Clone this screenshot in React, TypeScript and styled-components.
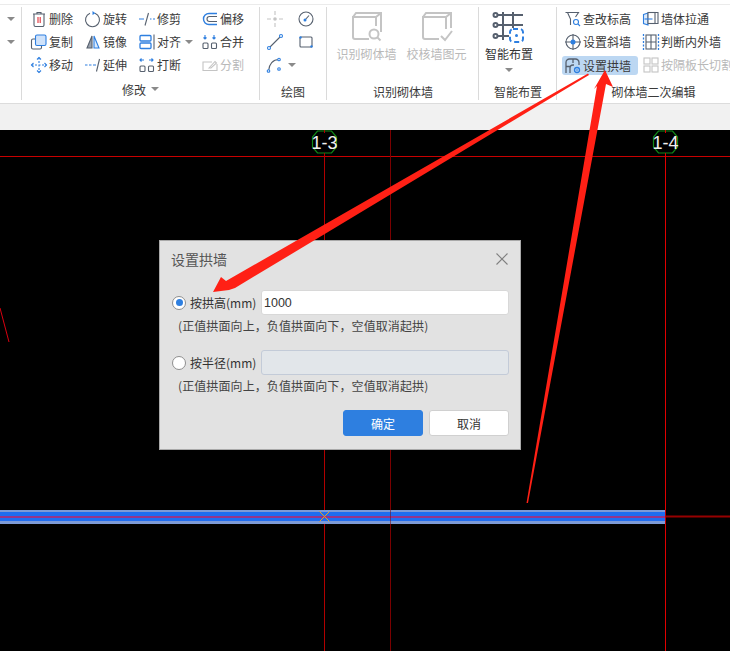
import React from "react";
import styled, { createGlobalStyle } from "styled-components";

const BLUE = "#2e7fe0";
const DARK = "#56606e";
const GRAY = "#c4c4c4";
const CJK = `"Noto Sans CJK SC", "Noto Sans", sans-serif`;

const GlobalStyle = createGlobalStyle`
   html, body {
      margin: 0;
      padding: 0;
      background: #000;
   }
`;

const Page = styled.div`
   position: relative;
   width: 730px;
   height: 651px;
   display: flex;
   flex-direction: column;
   overflow: hidden;
   font-family: ${CJK};
   font-size: 12px;
   color: #333;
`;

const Ribbon = styled.div`
   height: 98px;
   flex: none;
   display: flex;
   padding-top: 5px;
   background: #fff;
   border-bottom: 1px solid #dcdcdc;
   box-shadow: inset 0 4px 0 #fff, inset 0 5px 0 #ebebeb;
`;

const Strip = styled.div`
   height: 26px;
   flex: none;
   background: #f1f1f1;
`;

const Group = styled.section<{ $width: number; $first?: boolean }>`
   width: ${(p) => p.$width}px;
   box-sizing: border-box;
   flex: none;
   display: flex;
   flex-direction: column;
   margin: 2px 0 3px;
   border-left: ${(p) => (p.$first ? "none" : "1px solid #dadada")};
`;

const GroupBody = styled.div<{ $endPad?: number }>`
   height: 72px;
   flex: none;
   padding-right: ${(p) => p.$endPad ?? 0}px;
`;

const GroupLabel = styled.div<{ $shift?: number; $raise?: number }>`
   height: 24px;
   flex: none;
   display: flex;
   align-items: center;
   justify-content: center;
   gap: 5px;
   margin-top: ${(p) => -(p.$raise ?? 0)}px;
   padding-left: ${(p) => p.$shift ?? 0}px;
   white-space: nowrap;
   color: #3a3a3a;
`;

const ToolGrid = styled.div<{ $columns: string; $pad: number }>`
   display: grid;
   grid-template-columns: ${(p) => p.$columns};
   grid-auto-rows: 23px;
   padding-left: ${(p) => p.$pad}px;
`;

const Tool = styled.div<{ $disabled?: boolean; $active?: boolean }>`
   display: flex;
   align-items: center;
   gap: 1px;
   white-space: nowrap;
   color: ${(p) => (p.$disabled ? "#b9b9b9" : "#3a3a3a")};
   ${(p) =>
      p.$active &&
      `
      background: #bcd7f2;
      border-radius: 3px;
      margin: 3px 4px 1px -2px;
      padding-left: 2px;
   `}
`;

const Caret = styled.span<{ $color?: string }>`
   width: 0;
   height: 0;
   border-left: 4px solid transparent;
   border-right: 4px solid transparent;
   border-top: 4px solid ${(p) => p.$color ?? "#8a8a8a"};
`;

const StubColumn = styled.div`
   display: flex;
   flex-direction: column;
   align-items: center;
`;

const StubCell = styled.div`
   height: 23px;
   width: 14px;
   display: flex;
   align-items: center;
   justify-content: center;
`;

const BigRow = styled.div`
   display: flex;
   justify-content: center;
   gap: 10px;
`;

const BigTool = styled.div<{ $disabled?: boolean }>`
   display: flex;
   flex-direction: column;
   align-items: center;
   width: 60px;
   white-space: nowrap;
   color: ${(p) => (p.$disabled ? "#b9b9b9" : "#333")};
`;

const BigIcon = styled.svg`
   width: 34px;
   height: 34px;
   margin-top: 3px;
   margin-bottom: 1px;
`;

const SmartCaret = styled.div`
   display: flex;
   justify-content: center;
   margin-top: 6px;
`;

const Canvas = styled.div`
   position: relative;
   flex: 1;
   background: #000;
`;

const Drawing = styled.svg`
   position: absolute;
   inset: 0;
   width: 730px;
   height: 521px;
`;

const Annotation = styled.svg`
   position: absolute;
   left: 0;
   top: 0;
   width: 730px;
   height: 651px;
   pointer-events: none;
`;

const Dialog = styled.div`
   position: absolute;
   left: 159px;
   top: 110px;
   width: 362px;
   height: 210px;
   box-sizing: border-box;
   display: flex;
   flex-direction: column;
   padding: 0 11px 0 12px;
   background: #e2e2e2;
   border: 1px solid #a9a9a9;
`;

const DialogHead = styled.div`
   height: 36px;
   flex: none;
   margin: 0 0 10px -1px;
   padding-bottom: 3px;
   display: flex;
   align-items: center;
   justify-content: space-between;
   font-size: 14px;
   color: #555;
`;

const CloseIcon = styled.svg`
   width: 12px;
   height: 12px;
   margin-right: 1px;
`;

const OptionRow = styled.div`
   display: flex;
   align-items: center;
   height: 25px;
`;

const Radio = styled.span<{ $checked?: boolean }>`
   width: 14px;
   height: 14px;
   box-sizing: border-box;
   flex: none;
   display: flex;
   align-items: center;
   justify-content: center;
   background: #fff;
   border: 1px solid #8e8e8e;
   border-radius: 50%;
   &::after {
      content: "";
      display: ${(p) => (p.$checked ? "block" : "none")};
      width: 7px;
      height: 7px;
      border-radius: 50%;
      background: ${BLUE};
   }
`;

const OptionLabel = styled.label`
   width: 66px;
   flex: none;
   margin: 0 5px 0 4px;
   font-size: 12px;
   color: #333;
   white-space: nowrap;
`;

const ValueInput = styled.input`
   flex: 1;
   min-width: 0;
   height: 25px;
   box-sizing: border-box;
   padding: 1px 2px 0;
   font-family: "Liberation Sans", sans-serif;
   font-size: 12.5px;
   color: #333;
   background: #fff;
   border: 1px solid #d8d8d8;
   border-radius: 3px;
   outline: none;
   &:disabled {
      background: #e2e6ea;
      border-color: #c3cbd8;
   }
`;

const Hint = styled.div`
   height: 20px;
   margin: 0 0 15px;
   padding-left: 6px;
   display: flex;
   align-items: center;
   color: #444;
   letter-spacing: 0.1px;
   white-space: nowrap;
`;

const Actions = styled.div`
   display: flex;
   justify-content: flex-end;
   gap: 6px;
`;

const Button = styled.button<{ $primary?: boolean }>`
   width: 80px;
   height: 26px;
   padding: 0;
   font-family: ${CJK};
   font-size: 12px;
   color: ${(p) => (p.$primary ? "#fff" : "#333")};
   background: ${(p) => (p.$primary ? BLUE : "#fff")};
   border: 1px solid ${(p) => (p.$primary ? BLUE : "#d0d0d0")};
   border-radius: 3px;
`;

const Glyph = ({ children }: { children: React.ReactNode }) => (
   <svg
      width="18"
      height="18"
      viewBox="0 0 18 18"
      fill="none"
      strokeWidth="1.1"
      style={{ flex: "none" }}>
      {children}
   </svg>
);

const arrowsIn = (
   <>
      <path d="M4 2v4M2.5 4.5 4 6l1.500-1.500M13 2v4M11.500 4.500 13 6l1.500-1.500" stroke={BLUE} />
      <rect x="2" y="10" width="5" height="5.500" rx="1" stroke={DARK} />
      <rect x="10.500" y="10" width="5" height="5.500" rx="1" stroke={DARK} />
   </>
);

const arrowsOut = (
   <>
      <path d="M6 4H2M3.500 2.500 2 4l1.500 1.500M11 4h4M13.500 2.500 15 4l-1.500 1.500" stroke={BLUE} />
      <rect x="2" y="10" width="5" height="5.500" rx="1" stroke={DARK} />
      <rect x="10.500" y="10" width="5" height="5.500" rx="1" stroke={DARK} />
   </>
);

const icons: Record<string, React.ReactNode> = {
   trash: (
      <>
         <path d="M3 4h12M7 4V2.500h4V4M4 4v11a1.500 1.500 0 0 0 1.500 1.500h7A1.500 1.500 0 0 0 14 15V4" stroke={DARK} />
         <path d="M8 7v6M10.200 7v6" stroke="#e0303a" />
      </>
   ),
   rotate: (
      <>
         <path d="M11 3.200A7 7 0 1 1 6 3.200" stroke={DARK} />
         <path d="M8.500 1 11.500 3.200 8.500 5z" fill={BLUE} />
      </>
   ),
   trim: (
      <>
         <path d="M1 9h5M12 9h1.500M15 9h2" stroke={BLUE} />
         <path d="M10.500 3 7 15.500" stroke={DARK} />
      </>
   ),
   offset: (
      <>
         <path d="M16 3.500H8a5.500 5.500 0 0 0 0 11h8" stroke={BLUE} strokeWidth="1.400" />
         <path d="M16 6.500H8.500a2.500 2.500 0 0 0 0 5H16" stroke={DARK} />
      </>
   ),
   copy: (
      <>
         <rect x="1.500" y="6" width="10" height="10" rx="1.500" stroke={DARK} />
         <rect x="5.500" y="2" width="10.500" height="10.500" rx="1.500" fill="#cfe2fa" stroke={BLUE} />
      </>
   ),
   mirror: (
      <>
         <path d="M8 3 3 15h5z" fill="#9aa2ad" stroke={DARK} />
         <path d="M10 3 15 15h-5z" fill="#dcebfc" stroke={BLUE} />
      </>
   ),
   align: (
      <>
         <rect x="2" y="2.500" width="11" height="5.500" rx="1" stroke={BLUE} strokeWidth="1.300" />
         <rect x="2" y="10" width="11" height="5.500" rx="1" stroke={BLUE} strokeWidth="1.300" />
         <path d="M16 1.500v15" stroke={DARK} />
      </>
   ),
   merge: arrowsIn,
   move: (
      <>
         <path d="M9 1.500v15M1.500 9h15" stroke={BLUE} strokeDasharray="2 1.500" />
         <path d="M7 3.500 9 1.500l2 2M7 14.500l2 2 2-2M3.500 7l-2 2 2 2M14.500 7l2 2-2 2" stroke={BLUE} />
      </>
   ),
   extend: (
      <>
         <path d="M1 9h2.500M5 9h2.500M9 9h3" stroke={BLUE} />
         <path d="M15.500 3 12.500 15.500" stroke={DARK} />
      </>
   ),
   split: arrowsOut,
   cut: (
      <>
         <path d="M16 8v6.500H2V6h9" stroke={GRAY} />
         <path d="M8 12l6-6.500 1.500 1.500-5.500 5z" stroke={GRAY} />
      </>
   ),
   point: (
      <>
         <path d="M1 9h4M13 9h4M9 1v4M9 13v4" stroke={GRAY} />
         <circle cx="9" cy="9" r="1.800" fill={GRAY} />
      </>
   ),
   gauge: (
      <>
         <circle cx="9" cy="9" r="7" stroke={DARK} />
         <path d="M8 10 12 5.500" stroke={DARK} />
         <circle cx="8" cy="10" r="1.500" fill={BLUE} />
      </>
   ),
   line: (
      <>
         <path d="M3.500 14.500 14.500 3.500" stroke={DARK} />
         <circle cx="3" cy="15" r="1.500" fill="#fff" stroke={BLUE} />
         <circle cx="15" cy="3" r="1.500" fill="#fff" stroke={BLUE} />
      </>
   ),
   rect: (
      <>
         <rect x="3" y="4" width="12" height="10" rx="1" stroke={DARK} />
         <circle cx="3.500" cy="4.500" r="1.200" fill={BLUE} />
         <circle cx="14.500" cy="13.500" r="1.200" fill={BLUE} />
      </>
   ),
   arc: (
      <>
         <path d="M2.500 15C3 8 7 3.500 13 3.500" stroke={DARK} />
         <circle cx="2.500" cy="15" r="1.300" fill="#fff" stroke={BLUE} />
         <circle cx="13" cy="3.500" r="1.300" fill="#fff" stroke={BLUE} />
         <circle cx="13" cy="13" r="1.300" fill="#fff" stroke={BLUE} />
      </>
   ),
   funnel: (
      <>
         <path d="M1.500 2.500h13l-3 4.500M3.500 2.500l3 6.500v6" stroke={DARK} />
         <circle cx="12" cy="12" r="2.500" stroke={BLUE} />
         <path d="M14 14l2 2" stroke={BLUE} />
      </>
   ),
   slope: (
      <>
         <circle cx="9" cy="9" r="7" stroke={DARK} />
         <path d="M9 1v16M1 9h16" stroke={DARK} />
         <circle cx="9" cy="9" r="2.500" fill={BLUE} />
      </>
   ),
   arch: (
      <>
         <path d="M2 16V5.500A3.500 3.500 0 0 1 5.500 2h6A3.500 3.500 0 0 1 15 5.500V8" stroke={DARK} strokeWidth="1.300" />
         <path d="M6 16v-5a3 3 0 0 1 3-3h1M2 9.500h4M9 2v4" stroke={DARK} strokeWidth="1.300" />
         <circle cx="13" cy="13" r="2.500" stroke={BLUE} strokeWidth="1.300" />
         <circle cx="13" cy="13" r="0.800" fill={BLUE} />
      </>
   ),
   pull: (
      <>
         <path d="M1.500 4.500 6 3v12l-4.500-1.500z" fill="#dcebfc" stroke={BLUE} />
         <rect x="6" y="2.500" width="7" height="11" fill="#fff" stroke={DARK} />
         <path d="M9 2.500h7v11h-3" stroke={DARK} />
         <path d="M2.500 9h8" stroke={BLUE} />
      </>
   ),
   inner: (
      <>
         <path d="M1.500 1v16M16.500 1v16" stroke={BLUE} strokeDasharray="2 1.500" strokeWidth="1.300" />
         <rect x="4" y="2" width="10" height="14" stroke={DARK} />
         <path d="M4 9h10M9 2v14" stroke={DARK} />
      </>
   ),
   panel: (
      <>
         <rect x="2" y="2" width="6" height="6" stroke={GRAY} />
         <rect x="2" y="10" width="6" height="6" stroke={GRAY} />
         <rect x="10" y="2" width="6" height="6" stroke={GRAY} />
         <rect x="10" y="10" width="6" height="6" stroke={GRAY} />
      </>
   ),
};

type ToolItem = {
   icon: string;
   text?: string;
   disabled?: boolean;
   active?: boolean;
   caret?: boolean;
};

const modifyTools: ToolItem[] = [
   { icon: "trash", text: "删除" },
   { icon: "rotate", text: "旋转" },
   { icon: "trim", text: "修剪" },
   { icon: "offset", text: "偏移" },
   { icon: "copy", text: "复制" },
   { icon: "mirror", text: "镜像" },
   { icon: "align", text: "对齐", caret: true },
   { icon: "merge", text: "合并" },
   { icon: "move", text: "移动" },
   { icon: "extend", text: "延伸" },
   { icon: "split", text: "打断" },
   { icon: "cut", text: "分割", disabled: true },
];

const drawTools: ToolItem[] = [
   { icon: "point" },
   { icon: "gauge" },
   { icon: "line" },
   { icon: "rect" },
   { icon: "arc", caret: true },
];

const editTools: ToolItem[] = [
   { icon: "funnel", text: "查改标高" },
   { icon: "pull", text: "墙体拉通" },
   { icon: "slope", text: "设置斜墙" },
   { icon: "inner", text: "判断内外墙" },
   { icon: "arch", text: "设置拱墙", active: true },
   { icon: "panel", text: "按隔板长切割", disabled: true },
];

const ToolList = ({ items }: { items: ToolItem[] }) => (
   <>
      {items.map((t) => (
         <Tool
            key={t.icon}
            $disabled={t.disabled}
            $active={t.active}>
            <Glyph>{icons[t.icon]}</Glyph>
            {t.text && <span>{t.text}</span>}
            {t.caret && <Caret style={{ marginLeft: 3 }} />}
         </Tool>
      ))}
   </>
);

const HINT = "(正值拱面向上，负值拱面向下，空值取消起拱)";

const AxisMark = ({ x, label, color }: { x: number; label: string; color: string }) => (
   <g>
      <polygon
         points={`${x - 7},131 ${x + 7},131 ${x + 12},137 ${x + 12},147 ${x + 7},153 ${x - 7},153 ${x - 12},147 ${x - 12},137`}
         fill="none"
         stroke="#118a18"
         strokeWidth="1.2"
      />
      <path
         d={`M${x} 130v3M${x} 153V651`}
         stroke={color}
      />
      <text
         x={x}
         y="148.5"
         textAnchor="middle"
         fontFamily="'Liberation Sans', sans-serif"
         fontSize="18"
         fill="#f0f0f0">
         {label}
      </text>
   </g>
);

export default function App() {
   return (
      <Page>
         <GlobalStyle />
         <Ribbon>
            <Group
               $first
               $width={21}>
               <GroupBody>
                  <StubColumn>
                     <StubCell>
                        <Caret />
                     </StubCell>
                     <StubCell>
                        <Caret />
                     </StubCell>
                  </StubColumn>
               </GroupBody>
            </Group>
            <Group $width={238}>
               <GroupBody>
                  <ToolGrid
                     $columns="54px 54px 63px 45px"
                     $pad={8}>
                     <ToolList items={modifyTools} />
                  </ToolGrid>
               </GroupBody>
               <GroupLabel $raise={2}>
                  修改
                  <Caret />
               </GroupLabel>
            </Group>
            <Group $width={67}>
               <GroupBody>
                  <ToolGrid
                     $columns="31px 31px"
                     $pad={6}>
                     <ToolList items={drawTools} />
                  </ToolGrid>
               </GroupBody>
               <GroupLabel>绘图</GroupLabel>
            </Group>
            <Group $width={152}>
               <GroupBody $endPad={2}>
                  <BigRow>
                     <BigTool $disabled>
                        <BigIcon
                           viewBox="0 0 34 34"
                           fill="none"
                           stroke={GRAY}
                           strokeWidth="2">
                           <path d="M19 29H5a2 2 0 0 1-2-2V7h23v9" />
                           <path d="M3 7l3-4h25v19M26 7l5-4" />
                           <circle
                              cx="24"
                              cy="24"
                              r="4.500"
                           />
                           <path d="M27.500 27.500l3 3" />
                        </BigIcon>
                        识别砌体墙
                     </BigTool>
                     <BigTool $disabled>
                        <BigIcon
                           viewBox="0 0 34 34"
                           fill="none"
                           stroke={GRAY}
                           strokeWidth="2">
                           <path d="M19 29H5a2 2 0 0 1-2-2V7h23v12" />
                           <path d="M3 7l3-4h25v15M26 7l5-4" />
                           <path d="M21 26l4 4 7-9" />
                        </BigIcon>
                        校核墙图元
                     </BigTool>
                  </BigRow>
               </GroupBody>
               <GroupLabel $shift={1}>识别砌体墙</GroupLabel>
            </Group>
            <Group $width={78}>
               <GroupBody $endPad={17}>
                  <BigRow>
                     <BigTool>
                        <BigIcon
                           viewBox="0 0 34 34"
                           fill="none"
                           stroke={DARK}
                           strokeWidth="2">
                           <path d="M11 2v28M21 2v16M3 5h28M3 15h28M3 26h14" />
                           <circle cx="3.500" cy="5" r="2" fill="#fff" />
                           <circle cx="3.500" cy="15" r="2" fill="#fff" />
                           <circle cx="3.500" cy="26" r="2" fill="#fff" />
                           <rect
                              x="18"
                              y="19"
                              width="13"
                              height="13"
                              rx="3"
                              fill="#fff"
                              stroke={BLUE}
                              strokeDasharray="5 3"
                           />
                           <circle cx="24.500" cy="25.500" r="1.500" fill={BLUE} stroke="none" />
                        </BigIcon>
                        智能布置
                     </BigTool>
                  </BigRow>
                  <SmartCaret>
                     <Caret />
                  </SmartCaret>
               </GroupBody>
               <GroupLabel $shift={1}>智能布置</GroupLabel>
            </Group>
            <Group $width={194}>
               <GroupBody>
                  <ToolGrid
                     $columns="78px 100px"
                     $pad={7}>
                     <ToolList items={editTools} />
                  </ToolGrid>
               </GroupBody>
               <GroupLabel>砌体墙二次编辑</GroupLabel>
            </Group>
         </Ribbon>
         <Strip />
         <Canvas>
            <Drawing viewBox="0 130 730 521">
               <path
                  d="M0 156.500H730"
                  stroke="#c80000"
               />
               <path
                  d="M665 516.500H730"
                  stroke="#960000"
                  strokeWidth="2"
               />
               <path
                  d="M0 308 9 342"
                  stroke="#d80010"
               />
               <AxisMark
                  x={324.5}
                  label="1-3"
                  color="#b00000"
               />
               <AxisMark
                  x={665.5}
                  label="1-4"
                  color="#e00000"
               />
               <path
                  d="M390.500 130V651"
                  stroke="#7a0000"
               />
               <rect x="0" y="510" width="666" height="14" fill="#7d9ad6" />
               <rect x="0" y="512" width="666" height="9" fill="#1f6cf0" />
               <rect x="0" y="516" width="666" height="2" fill="#96348a" />
               <path
                  d="M390.500 510V524"
                  stroke="#7a0000"
                  strokeOpacity="0.5"
               />
               <path
                  d="M665.500 510V524"
                  stroke="#c00000"
               />
               <path
                  d="M319.500 511.500l10 10M329.500 511.500l-10 10"
                  stroke="#e8a020"
               />
            </Drawing>
            <Dialog>
               <DialogHead>
                  设置拱墙
                  <CloseIcon
                     viewBox="0 0 12 12"
                     stroke="#808080"
                     strokeWidth="1.100">
                     <path d="M.5.500l11 11M11.500.500l-11 11" />
                  </CloseIcon>
               </DialogHead>
               <OptionRow>
                  <Radio $checked />
                  <OptionLabel>按拱高(mm)</OptionLabel>
                  <ValueInput
                     value="1000"
                     readOnly
                  />
               </OptionRow>
               <Hint>{HINT}</Hint>
               <OptionRow>
                  <Radio />
                  <OptionLabel>按半径(mm)</OptionLabel>
                  <ValueInput disabled />
               </OptionRow>
               <Hint>{HINT}</Hint>
               <Actions>
                  <Button $primary>确定</Button>
                  <Button>取消</Button>
               </Actions>
            </Dialog>
         </Canvas>
         <Annotation viewBox="0 0 730 651">
            <polygon
               points="588,73.500 589,75 235,288 229,290 213,292 221,277 226,281"
               fill="#ff2015"
            />
            <polygon
               points="605,70 613,87 606,84 528,503 526.500,503 597,86 594,89"
               fill="#ff2015"
            />
         </Annotation>
      </Page>
   );
}
